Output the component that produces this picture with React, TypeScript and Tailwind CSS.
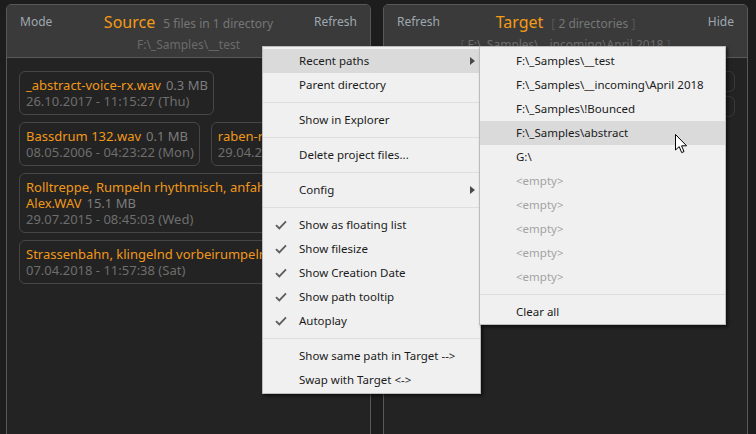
import React from 'react';

type FileCard = { name: string[]; size: string; date: string };

const Check = () => (
  <svg width="12" height="10" viewBox="0 0 12 10">
    <path d="M1 5.2 L4.3 8.4 L11 1.4" fill="none" stroke="#5c5c5c" strokeWidth="1.8" />
  </svg>
);

const Arrow = () => (
  <svg width="5" height="8" viewBox="0 0 5 8">
    <path d="M0 0 L5 4 L0 8 Z" fill="#4a4a4a" />
  </svg>
);

const Separator = () => (
  <div className="h-[11px] flex items-center">
    <div className="h-px w-full bg-[#dedede]" />
  </div>
);

const MenuRow = ({
  label,
  checked,
  sub,
  active,
  muted,
}: {
  label: string;
  checked?: boolean;
  sub?: boolean;
  active?: boolean;
  muted?: boolean;
}) => (
  <div className={`flex items-center h-[24px] ${active ? 'bg-[#dadada]' : ''}`}>
    <div className="w-[36px] pl-[12px] flex items-center">{checked && <Check />}</div>
    <div className={`flex-1 whitespace-nowrap ${muted ? 'text-[#a3a3a3]' : 'text-[#1b1b1b]'}`}>{label}</div>
    {sub && (
      <div className="pr-[5px] flex items-center">
        <Arrow />
      </div>
    )}
  </div>
);

const Card = ({ card }: { card: FileCard }) => (
  <div className="border border-[#464646] rounded-[6px] pl-[6px] pr-[5px] py-[5px] leading-[16px] text-[13px] whitespace-nowrap shrink-0">
    {card.name.map((line, i) => (
      <div key={i}>
        <span className="text-[#f0981a]">{line}</span>
        {i === card.name.length - 1 && <span className="text-[#7d7d7d] ml-[5px]">{card.size}</span>}
      </div>
    ))}
    <div className="text-[#6e6e6e]">{card.date}</div>
  </div>
);

const rows: FileCard[][] = [
  [{ name: ['_abstract-voice-rx.wav'], size: '0.3 MB', date: '26.10.2017 - 11:15:27 (Thu)' }],
  [
    { name: ['Bassdrum 132.wav'], size: '0.1 MB', date: '08.05.2006 - 04:23:22 (Mon)' },
    { name: ['raben-rx.wav'], size: '0.4 MB', date: '29.04.2018 - 19:02:11 (Sun)' },
  ],
  [
    {
      name: ['Rolltreppe, Rumpeln rhythmisch, anfahrend, Kaufhaus', 'Alex.WAV'],
      size: '15.1 MB',
      date: '29.07.2015 - 08:45:03 (Wed)',
    },
  ],
  [{ name: ['Strassenbahn, klingelnd vorbeirumpelnd, Fahrt.wav'], size: '8.2 MB', date: '07.04.2018 - 11:57:38 (Sat)' }],
];

const Panel = ({
  left,
  title,
  info,
  right,
  path,
  children,
}: {
  left: string;
  title: string;
  info: React.ReactNode;
  right: string;
  path: React.ReactNode;
  children: React.ReactNode;
}) => (
  <div className="w-[365px] h-[460px] border border-[#585858] rounded-t-[5px] bg-[#232323] flex flex-col overflow-hidden">
    <div className="h-[53px] bg-[#3a3a3a] border-b border-[#5a5a5a] px-[13px] pt-[5px]">
      <div className="grid grid-cols-[1fr_auto_1fr] items-center h-[22px]">
        <span className="justify-self-start text-[12px] text-[#9ea8b1]">{left}</span>
        <span className="flex items-baseline gap-[8px]">
          <span className="text-[16px] text-[#f59b16]">{title}</span>
          <span className="text-[12px] text-[#767676]">{info}</span>
        </span>
        <span className="justify-self-end text-[12px] text-[#9ea8b1]">{right}</span>
      </div>
      <div className="mt-[5px] h-[16px] leading-[16px] text-center text-[12px] text-[#6a6a6a]">{path}</div>
    </div>
    {children}
  </div>
);

const Cursor = () => (
  <svg width="13" height="20" viewBox="0 0 13 20">
    <path
      d="M0.5 0.5 L0.5 16 L4.2 12.6 L6.7 18.6 L9 17.6 L6.6 11.8 L11.6 11.8 Z"
      fill="#ffffff"
      stroke="#000000"
      strokeWidth="1"
      strokeLinejoin="round"
    />
  </svg>
);

export default function App() {
  return (
    <div className="relative w-[756px] h-[434px] overflow-hidden bg-[#1d1d1d] font-['Segoe_UI','Noto_Sans',sans-serif]">
      <div className="flex gap-[12px] pl-[6px] pt-[4px]">
        <Panel left="Mode" title="Source" info="5 files in 1 directory" right="Refresh" path="F:\_Samples\__test">
          <div className="flex flex-col gap-[7px] px-[12px] pt-[13px]">
            {rows.map((row, i) => (
              <div key={i} className="flex gap-[11px]">
                {row.map((c, j) => (
                  <Card key={j} card={c} />
                ))}
              </div>
            ))}
          </div>
        </Panel>
        <Panel
          left="Refresh"
          title="Target"
          info={<span className="text-[#777]"><span className="text-[#555]">[</span> 2 directories <span className="text-[#555]">]</span></span>}
          right="Hide"
          path={<span><span className="text-[#505050]">[</span> F:\_Samples\__incoming\April 2018 <span className="text-[#505050]">]</span></span>}
        >
          <div className="flex flex-col gap-[4px] px-[12px] pt-[13px]">
            <div className="h-[21px] border border-[#3a3a3a] rounded-[6px] px-[7px] text-[12px] leading-[19px] text-[#9a9a9a]">Loops</div>
            <div className="h-[21px] border border-[#3a3a3a] rounded-[6px] px-[7px] text-[12px] leading-[19px] text-[#9a9a9a]">Vocals</div>
          </div>
        </Panel>
      </div>

      <div className="absolute left-[262px] top-[46px] w-[219px] bg-[#f0f0f0] border border-[#bcbcbc] pt-[2px] pb-[1px] text-[11.5px] shadow-[2px_2px_3px_rgba(0,0,0,0.55)]">
        <MenuRow label="Recent paths" sub active />
        <MenuRow label="Parent directory" />
        <Separator />
        <MenuRow label="Show in Explorer" />
        <Separator />
        <MenuRow label="Delete project files..." />
        <Separator />
        <MenuRow label="Config" sub />
        <Separator />
        <MenuRow label="Show as floating list" checked />
        <MenuRow label="Show filesize" checked />
        <MenuRow label="Show Creation Date" checked />
        <MenuRow label="Show path tooltip" checked />
        <MenuRow label="Autoplay" checked />
        <Separator />
        <MenuRow label="Show same path in Target -->" />
        <MenuRow label="Swap with Target <->" />
      </div>

      <div className="absolute left-[479px] top-[46px] w-[247px] bg-[#f0f0f0] border border-[#bcbcbc] pt-[2px] text-[11.5px] shadow-[2px_2px_3px_rgba(0,0,0,0.55)]">
        <MenuRow label="F:\_Samples\__test" />
        <MenuRow label="F:\_Samples\__incoming\April 2018" />
        <MenuRow label="F:\_Samples\!Bounced" />
        <MenuRow label="F:\_Samples\abstract" active />
        <MenuRow label="G:\" />
        <MenuRow label="<empty>" muted />
        <MenuRow label="<empty>" muted />
        <MenuRow label="<empty>" muted />
        <MenuRow label="<empty>" muted />
        <MenuRow label="<empty>" muted />
        <Separator />
        <MenuRow label="Clear all" />
      </div>

      <div className="absolute left-[675px] top-[134px]">
        <Cursor />
      </div>
    </div>
  );
}
